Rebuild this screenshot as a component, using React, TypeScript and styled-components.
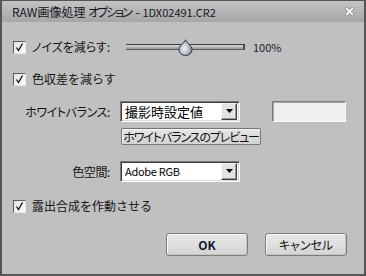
import React from "react";
import styled, { createGlobalStyle } from "styled-components";

const Global = createGlobalStyle`
  html, body { margin: 0; padding: 0; background: #c0c0c0; }
  body {
    font-family: "Noto Sans CJK JP", "Noto Sans", sans-serif;
    font-size: 12px;
    color: #141414;
  }
`;

const Window = styled.div`
  width: 366px;
  height: 276px;
  box-sizing: border-box;
  display: flex;
  flex-direction: column;
  background: #c0c0c0;
  border-style: solid;
  border-color: #555;
  border-width: 1px 2px 2px 2px;
`;

const TitleBar = styled.div`
  height: 21px;
  flex: none;
  display: flex;
  align-items: center;
  justify-content: space-between;
  padding: 0 10px 0 10px;
  background: linear-gradient(#c4c4c4, #a6a6a6);
  font-size: 12px;
  line-height: 21px;
  color: #161622;
  font-feature-settings: "palt";
  white-space: pre;
`;

const Kana = styled.span<{ $ls: number }>`
  letter-spacing: ${(p) => p.$ls}px;
`;

const Latin = styled.span<{ $ls?: number }>`
  font-size: 11px;
  letter-spacing: ${(p) => p.$ls || 0}px;
`;

const CloseBox = styled.span`
  display: flex;
  width: 9px;
  height: 9px;
`;

const Body = styled.div`
  flex: 1;
  display: flex;
  flex-direction: column;
`;

const CheckRow = styled.div<{ $mt: number }>`
  margin-top: ${(p) => p.$mt}px;
  height: 16px;
  display: flex;
  align-items: center;
  padding-left: 11px;
  line-height: 16px;
`;

const CheckBoxBox = styled.span`
  box-sizing: border-box;
  width: 13px;
  height: 13px;
  flex: none;
  display: flex;
  border: 1px solid;
  border-color: #5e5e5e #e8e8e8 #e8e8e8 #5e5e5e;
  background: linear-gradient(135deg, #e4e4e4, #fafafa);
  margin-right: 6px;
`;

const CheckLabel = styled.span<{ $w?: number; $palt?: boolean }>`
  ${(p) => (p.$w ? `width: ${p.$w}px; flex: none;` : "")}
  ${(p) => (p.$palt ? `font-feature-settings: "palt";` : "")}
  white-space: nowrap;
`;

const Track = styled.div`
  position: relative;
  box-sizing: border-box;
  width: 119px;
  height: 6px;
  flex: none;
  border-top: 1px solid #3e3e3e;
  border-bottom: 1px solid #5a5a5a;
  border-right: 2px solid #4a4a4a;
  background: linear-gradient(#d4d4d4, #9a9a9a);
`;

const Thumb = styled.span`
  position: absolute;
  left: 52px;
  top: -6px;
  width: 15px;
  height: 17px;
  display: flex;
`;

const Value = styled.span`
  margin-left: 8px;
  font-size: 11px;
  color: #1a1a2a;
`;

const FieldRow = styled.div<{ $mt: number }>`
  margin-top: ${(p) => p.$mt}px;
  display: grid;
  grid-template-columns: 108px 120px 74px;
  column-gap: 10px;
  align-items: center;
  height: 22px;
`;

const FieldLabel = styled.span`
  text-align: right;
  font-feature-settings: "palt";
  letter-spacing: -0.4px;
  white-space: nowrap;
`;

const Select = styled.div`
  box-sizing: border-box;
  width: 120px;
  height: 21px;
  display: flex;
  align-items: center;
  background: #fff;
  border: 1px solid;
  border-color: #7a7a7a #fdfdfd #fdfdfd #7a7a7a;
  box-shadow: inset 1px 1px 0 #3c3c3c, inset -1px -1px 0 #d8d8d8;
  padding: 0 2px 0 4px;
  font-size: 13px;
  line-height: 17px;
  color: #000;
`;

const SelectText = styled.span`
  flex: 1;
  white-space: nowrap;
  overflow: hidden;
`;

const ArrowButton = styled.span`
  box-sizing: border-box;
  width: 16px;
  height: 17px;
  flex: none;
  display: flex;
  align-items: center;
  justify-content: center;
  background: #e2e2e2;
  border: 1px solid;
  border-color: #f6f6f6 #3c3c3c #3c3c3c #f6f6f6;
  box-shadow: inset -1px -1px 0 #9a9a9a;
`;

const TextBox = styled.div`
  box-sizing: border-box;
  width: 74px;
  height: 21px;
  margin-left: 22px;
  background: #efefef;
  border: 1px solid;
  border-color: #7c7c7c #fbfbfb #fbfbfb #7c7c7c;
  box-shadow: inset 1px 1px 0 #a8a8a8;
`;

const PreviewRow = styled.div`
  margin-top: 6px;
  padding-left: 119px;
  display: flex;
`;

const SmallButton = styled.button`
  box-sizing: border-box;
  width: 140px;
  height: 17px;
  padding: 0;
  font-family: inherit;
  font-size: 12px;
  line-height: 15px;
  color: #111;
  font-feature-settings: "palt";
  letter-spacing: -1.1px;
  background: linear-gradient(#e6e6e6, #d2d2d2);
  border: 1px solid #767676;
  border-radius: 2px;
  box-shadow: inset 1px 1px 0 #f4f4f4;
  white-space: nowrap;
`;

const ButtonRow = styled.div`
  margin-top: 19px;
  display: flex;
  justify-content: flex-end;
  gap: 17px;
  padding-right: 17px;
`;

const DialogButton = styled.button<{ $bold?: boolean }>`
  box-sizing: border-box;
  width: 82px;
  height: 23px;
  padding: 0;
  font-family: inherit;
  font-size: 12px;
  font-weight: ${(p) => (p.$bold ? 700 : 400)};
  color: ${(p) => (p.$bold ? "#101830" : "#141414")};
  font-feature-settings: "palt";
  background: linear-gradient(#e8e8e8, #d4d4d4);
  border: 1px solid #7c7c7c;
  border-radius: 3px;
  box-shadow: inset 1px 1px 0 #f8f8f8, inset -1px -1px 0 #c4c4c4;
`;

const Check = () => (
  <CheckBoxBox>
    <svg width="11" height="11" viewBox="0 0 11 11">
      <polyline points="2.5,5.5 4.5,8.5 8.5,1.5" fill="none" stroke="#111" strokeWidth="1.3" />
    </svg>
  </CheckBoxBox>
);

const Arrow = () => (
  <ArrowButton>
    <svg width="7" height="4" viewBox="0 0 7 4">
      <polygon points="0,0 7,0 3.5,4" fill="#000" />
    </svg>
  </ArrowButton>
);

export default function App() {
  return (
    <>
      <Global />
      <Window>
        <TitleBar>
          <span>
            RAW画像処理 <Kana $ls={-2}>オプショ</Kana>ン - <Latin>1DX02491.CR2</Latin>
          </span>
          <CloseBox>
            <svg width="9" height="9" viewBox="0 0 9 9">
              <path d="M1.5 1.5 L7.5 7.5 M7.5 1.5 L1.5 7.5" stroke="#7a7a7a" strokeWidth="3" strokeLinecap="round" />
              <path d="M1.5 1.5 L7.5 7.5 M7.5 1.5 L1.5 7.5" stroke="#fff" strokeWidth="1.8" strokeLinecap="round" />
            </svg>
          </CloseBox>
        </TitleBar>
        <Body>
          <CheckRow $mt={17}>
            <Check />
            <CheckLabel $w={94} $palt>ノイズを減らす:</CheckLabel>
            <Track>
              <Thumb>
                <svg width="15" height="17" viewBox="0 0 15 17">
                  <defs>
                    <radialGradient id="tg" cx="0.4" cy="0.55" r="0.6">
                      <stop offset="0" stopColor="#f0f4f8" />
                      <stop offset="0.6" stopColor="#b4c0cc" />
                      <stop offset="1" stopColor="#6e7c8a" />
                    </radialGradient>
                  </defs>
                  <path
                    d="M7.5 0.8 C6.5 3.5 1 7 1 10.8 A6.5 5.7 0 0 0 14 10.8 C14 7 8.5 3.5 7.5 0.8 Z"
                    fill="url(#tg)"
                    stroke="#3a3a3a"
                    strokeWidth="1"
                  />
                </svg>
              </Thumb>
            </Track>
            <Value>100%</Value>
          </CheckRow>
          <CheckRow $mt={16}>
            <Check />
            <CheckLabel>色収差を減らす</CheckLabel>
          </CheckRow>
          <FieldRow $mt={13}>
            <FieldLabel>ホワイトバランス:</FieldLabel>
            <Select>
              <SelectText>撮影時設定値</SelectText>
              <Arrow />
            </Select>
            <TextBox />
          </FieldRow>
          <PreviewRow>
            <SmallButton>ホワイトバランスのプレビュー</SmallButton>
          </PreviewRow>
          <FieldRow $mt={15}>
            <FieldLabel>色空間:</FieldLabel>
            <Select>
              <SelectText>
                <Latin $ls={-0.3}>Adobe RGB</Latin>
              </SelectText>
              <Arrow />
            </Select>
          </FieldRow>
          <CheckRow $mt={16}>
            <Check />
            <CheckLabel>露出合成を作動させる</CheckLabel>
          </CheckRow>
          <ButtonRow>
            <DialogButton $bold>OK</DialogButton>
            <DialogButton>キャンセル</DialogButton>
          </ButtonRow>
        </Body>
      </Window>
    </>
  );
}
